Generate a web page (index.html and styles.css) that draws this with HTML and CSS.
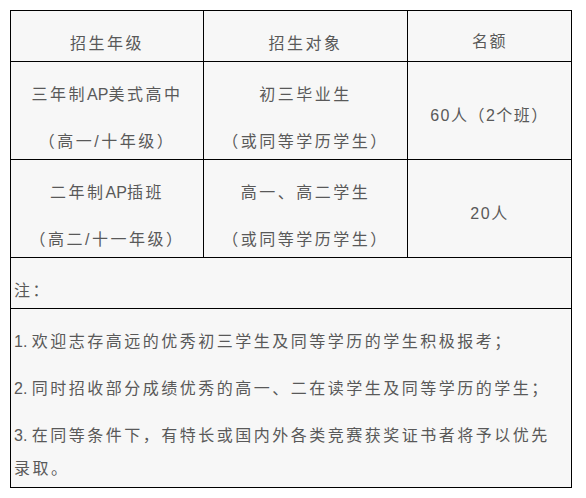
FILE: index.html
```html
<!DOCTYPE html>
<html lang="zh-CN">
<head>
<meta charset="utf-8">
<link rel="stylesheet" href="styles.css">
</head>
<body>
<table class="enroll">
  <colgroup>
    <col class="c1">
    <col class="c2">
    <col class="c3">
  </colgroup>
  <tr>
    <td><p>招生年级</p></td>
    <td><p>招生对象</p></td>
    <td class="plain"><p>名额</p></td>
  </tr>
  <tr>
    <td><p>三年制<span class="lat">AP</span>美式高中</p><p>（高一/十年级）</p></td>
    <td><p>初三毕业生</p><p>（或同等学历学生）</p></td>
    <td class="plain"><p>60人（2个班）</p></td>
  </tr>
  <tr>
    <td><p>二年制<span class="lat">AP</span>插班</p><p>（高二/十一年级）</p></td>
    <td><p>高一、高二学生</p><p>（或同等学历学生）</p></td>
    <td class="plain"><p>20人</p></td>
  </tr>
  <tr>
    <td class="note" colspan="3"><p>注：</p></td>
  </tr>
  <tr>
    <td class="note list" colspan="3">
      <p><span class="lat">1. </span>欢迎志存高远的优秀初三学生及同等学历的学生积极报考；</p>
      <p><span class="lat">2. </span>同时招收部分成绩优秀的高一、二在读学生及同等学历的学生；</p>
      <p><span class="lat">3. </span>在同等条件下，有特长或国内外各类竞赛获奖证书者将予以优先录取。</p>
    </td>
  </tr>
</table>
</body>
</html>
```

FILE: styles.css
```css
html, body {
  margin: 0;
  padding: 0;
  background: #ffffff;
}

body {
  padding: 10px;
  font-family: "Liberation Sans", "Noto Sans CJK SC", sans-serif;
  font-size: 16px;
  color: #595959;
}

.enroll {
  border-collapse: collapse;
  width: 561px;
  table-layout: fixed;
  background: #f7f7f7;
}

.c1 { width: 193px; }
.c2 { width: 204px; }
.c3 { width: 164px; }

.enroll td {
  border: 1px solid #000000;
  padding: 1px 3px;
  text-align: center;
  vertical-align: middle;
  letter-spacing: 2.5px;
}

.enroll td p {
  margin: 15px 0 0;
  line-height: 33px;
}

.enroll td p + p {
  margin-top: 14px;
}

.enroll td.plain {
  letter-spacing: 1.5px;
}

.enroll td.plain p {
  margin-top: 10px;
}

.enroll td.note {
  text-align: left;
}

.enroll td.list {
  padding-bottom: 2px;
}

.lat {
  letter-spacing: 0;
}
```
